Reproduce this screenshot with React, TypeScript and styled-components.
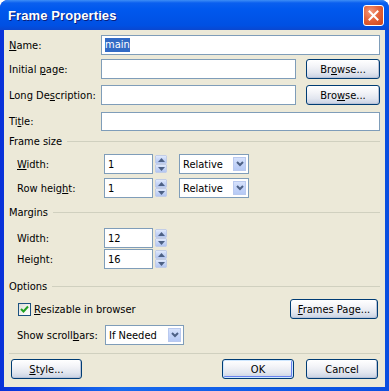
import React from "react";
import styled, { createGlobalStyle } from "styled-components";

const GlobalStyle = createGlobalStyle`
  html, body { margin: 0; padding: 0; background: #ffffff; }
  * { box-sizing: border-box; }
`;

const FONT = `Tahoma, "DejaVu Sans Condensed", "Liberation Sans", sans-serif`;

const Window = styled.div`
  width: 389px;
  height: 391px;
  display: flex;
  flex-direction: column;
  background: linear-gradient(to right, #0831d9 0%, #166aee 30%, #0a4fe0 100%);
  border-radius: 8px 8px 0 0;
  overflow: hidden;
  font-family: ${FONT};
  font-size: 11px;
  color: #000;
`;

const TitleBar = styled.div`
  height: 30px;
  flex: none;
  display: flex;
  align-items: center;
  justify-content: space-between;
  padding: 0 5px 0 8px;
  background: linear-gradient(
    to bottom,
    #3d8df6 0%,
    #0a5fef 10%,
    #0058ee 30%,
    #0054e8 60%,
    #0050e3 85%,
    #0a47d0 100%
  );
`;

const TitleText = styled.span`
  color: #ffffff;
  font-family: "Liberation Sans", Arial, sans-serif;
  font-weight: bold;
  font-size: 13px;
  text-shadow: 1px 1px 0 #0a1e7a;
  letter-spacing: 0.1px;
`;

const CloseButton = styled.div`
  width: 21px;
  height: 21px;
  border: 1px solid #ffffff;
  border-radius: 3px;
  background: radial-gradient(circle at 35% 30%, #f49a7c 0%, #e4643c 45%, #cc4418 100%);
  display: flex;
  align-items: center;
  justify-content: center;
`;

const Client = styled.div`
  flex: 1;
  margin: 0 4px 4px 4px;
  background: #ece9d8;
  padding: 5px 5px 0 5px;
  display: flex;
  flex-direction: column;
`;

const Row = styled.div<{ $mt?: number; $indent?: number; $h?: number }>`
  display: flex;
  align-items: center;
  height: ${(p) => p.$h ?? 20}px;
  margin-top: ${(p) => p.$mt ?? 0}px;
  padding-left: ${(p) => p.$indent ?? 0}px;
  flex: none;
`;

const Label = styled.span<{ $w?: number }>`
  width: ${(p) => (p.$w ? `${p.$w}px` : "auto")};
  flex: none;
  white-space: nowrap;
`;

const Field = styled.div<{ $w?: number; $h?: number }>`
  height: ${(p) => p.$h ?? 20}px;
  ${(p) => (p.$w ? `width: ${p.$w}px; flex: none;` : "flex: 1;")}
  border: 1px solid #7f9db9;
  background: #ffffff;
  display: flex;
  align-items: center;
  padding-left: 3px;
  white-space: nowrap;
`;

const Selected = styled.span`
  background: #316ac5;
  color: #ffffff;
  padding: 0 0 1px 0;
  line-height: 13px;
`;

const Gap = styled.div<{ $w: number }>`
  width: ${(p) => p.$w}px;
  flex: none;
`;

const Button = styled.div<{ $w: number; $default?: boolean; $ml?: string; $mr?: number }>`
  width: ${(p) => p.$w}px;
  height: 20px;
  flex: none;
  margin-left: ${(p) => p.$ml ?? "0"};
  margin-right: ${(p) => p.$mr ?? 0}px;
  border: 1px solid #003c74;
  border-radius: 3px;
  background: linear-gradient(to bottom, #ffffff 0%, #f3f4f8 35%, #e2e6ef 70%, #c8d1e3 100%);
  box-shadow: ${(p) =>
    p.$default
      ? "inset 0 0 0 1px #cee7ff, inset -1px -1px 0 1px #6982ee"
      : "inset -1px -1px 0 #b9c3d8"};
  display: flex;
  align-items: center;
  justify-content: center;
  white-space: nowrap;
`;

const GroupHeader = styled.div<{ $mt: number }>`
  display: flex;
  align-items: center;
  height: 14px;
  margin-top: ${(p) => p.$mt}px;
  flex: none;
`;

const HeaderLine = styled.div`
  flex: 1;
  height: 1px;
  margin-left: 5px;
  background: #d0d0bf;
`;

const Spinner = styled.div`
  width: 12px;
  height: 20px;
  flex: none;
  display: flex;
  flex-direction: column;
  justify-content: space-between;
  padding: 1px 0;
`;

const SpinHalf = styled.div`
  height: 9px;
  border: 1px solid #ffffff;
  border-radius: 1px;
  background: linear-gradient(to bottom, #e0e9fc 0%, #c7d6f7 50%, #b3c6f1 100%);
  display: flex;
  align-items: center;
  justify-content: center;
  outline: 1px solid #c2cde6;
  outline-offset: -1px;
`;

const DropButton = styled.div`
  width: 15px;
  height: 16px;
  margin: 1px 1px 1px auto;
  flex: none;
  border: 1px solid #ffffff;
  border-radius: 1px;
  outline: 1px solid #b9c9ef;
  outline-offset: -2px;
  background: linear-gradient(to bottom, #d9e4fc 0%, #c4d4f9 50%, #b4c8f4 100%);
  display: flex;
  align-items: center;
  justify-content: center;
`;

const SelectField = styled(Field)`
  padding-right: 0;
`;

const CheckBox = styled.div`
  width: 13px;
  height: 13px;
  flex: none;
  border: 1px solid #1c5180;
  background: linear-gradient(135deg, #dcdcd7 0%, #f5f5f2 60%, #ffffff 100%);
  display: flex;
  align-items: center;
  justify-content: center;
  margin-right: 3px;
`;

const Separator = styled.div<{ $mt: number }>`
  height: 1px;
  margin: ${(p) => p.$mt}px 0 0 0;
  background: #d0d0bf;
  flex: none;
`;

const Arrow = ({ up }: { up?: boolean }) => (
  <svg width="7" height="4" viewBox="0 0 7 4">
    {up ? (
      <path d="M0 4 L3.5 0 L7 4 Z" fill="#4d6185" />
    ) : (
      <path d="M0 0 L3.5 4 L7 0 Z" fill="#4d6185" />
    )}
  </svg>
);

const Chevron = () => (
  <svg width="8" height="6" viewBox="0 0 8 6">
    <path d="M1 1 L4 4 L7 1" stroke="#4d6185" strokeWidth="2" fill="none" />
  </svg>
);

const Spin = () => (
  <Spinner>
    <SpinHalf>
      <Arrow up />
    </SpinHalf>
    <SpinHalf>
      <Arrow />
    </SpinHalf>
  </Spinner>
);

const Select = ({ w, value }: { w: number; value: string }) => (
  <SelectField $w={w}>
    <span>{value}</span>
    <DropButton>
      <Chevron />
    </DropButton>
  </SelectField>
);

export default function App() {
  return (
    <>
      <GlobalStyle />
      <Window>
        <TitleBar>
          <TitleText>Frame Properties</TitleText>
          <CloseButton>
            <svg width="11" height="11" viewBox="0 0 11 11">
              <path d="M1.5 1.5 L9.5 9.5 M9.5 1.5 L1.5 9.5" stroke="#ffffff" strokeWidth="2" strokeLinecap="square" />
            </svg>
          </CloseButton>
        </TitleBar>
        <Client>
          <Row>
            <Label $w={92}>
              <u>N</u>ame:
            </Label>
            <Field>
              <Selected>main</Selected>
            </Field>
          </Row>
          <Row $mt={4}>
            <Label $w={92}>
              Initial <u>p</u>age:
            </Label>
            <Field />
            <Gap $w={10} />
            <Button $w={74}>
              Br<u>o</u>wse...
            </Button>
          </Row>
          <Row $mt={6}>
            <Label $w={92}>
              Long De<u>s</u>cription:
            </Label>
            <Field />
            <Gap $w={10} />
            <Button $w={74}>
              Bro<u>w</u>se...
            </Button>
          </Row>
          <Row $mt={6}>
            <Label $w={92}>
              Ti<u>t</u>le:
            </Label>
            <Field $h={19} />
          </Row>

          <GroupHeader $mt={3}>
            <span>Frame size</span>
            <HeaderLine />
          </GroupHeader>
          <Row $mt={6} $indent={8}>
            <Label $w={87}>
              <u>W</u>idth:
            </Label>
            <Field $w={49}>1</Field>
            <Gap $w={2} />
            <Spin />
            <Gap $w={12} />
            <Select w={70} value="Relative" />
          </Row>
          <Row $mt={4} $indent={8}>
            <Label $w={87}>
              Row heig<u>h</u>t:
            </Label>
            <Field $w={49}>1</Field>
            <Gap $w={2} />
            <Spin />
            <Gap $w={12} />
            <Select w={70} value="Relative" />
          </Row>

          <GroupHeader $mt={7}>
            <span>Margins</span>
            <HeaderLine />
          </GroupHeader>
          <Row $mt={9} $indent={8}>
            <Label $w={87}>Width:</Label>
            <Field $w={49}>12</Field>
            <Gap $w={2} />
            <Spin />
          </Row>
          <Row $mt={1} $indent={8}>
            <Label $w={87}>Height:</Label>
            <Field $w={49}>16</Field>
            <Gap $w={2} />
            <Spin />
          </Row>

          <GroupHeader $mt={10}>
            <span>Options</span>
            <HeaderLine />
          </GroupHeader>
          <Row $mt={6} $indent={9}>
            <CheckBox>
              <svg width="9" height="9" viewBox="0 0 9 9">
                <path d="M1 4 L3.5 6.5 L8 1.5" stroke="#21a121" strokeWidth="2" fill="none" />
              </svg>
            </CheckBox>
            <Label>
              <u>R</u>esizable in browser
            </Label>
            <Button $w={88} $ml="auto" $mr={2}>
              <span>
                <u>F</u>rames Page...
              </span>
            </Button>
          </Row>
          <Row $mt={6} $indent={8}>
            <Label $w={88}>
              Show scroll<u>b</u>ars:
            </Label>
            <Select w={79} value="If Needed" />
          </Row>

          <Separator $mt={8} />
          <Row $mt={5}>
            <Gap $w={2} />
            <Button $w={71}>
              <span>
                <u>S</u>tyle...
              </span>
            </Button>
            <Button $w={72} $ml="auto" $default>
              OK
            </Button>
            <Gap $w={12} />
            <Button $w={72} $mr={2}>
              Cancel
            </Button>
          </Row>
        </Client>
      </Window>
    </>
  );
}
